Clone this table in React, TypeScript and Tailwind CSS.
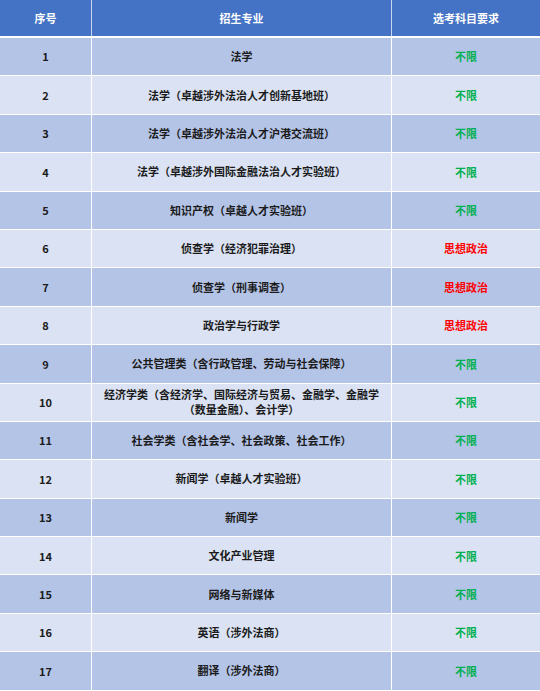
import React from 'react';

type Row = { no: number; major: React.ReactNode; req: string };

const rows: Row[] = [
  { no: 1, major: '法学', req: '不限' },
  { no: 2, major: '法学（卓越涉外法治人才创新基地班）', req: '不限' },
  { no: 3, major: '法学（卓越涉外法治人才沪港交流班）', req: '不限' },
  { no: 4, major: '法学（卓越涉外国际金融法治人才实验班）', req: '不限' },
  { no: 5, major: '知识产权（卓越人才实验班）', req: '不限' },
  { no: 6, major: '侦查学（经济犯罪治理）', req: '思想政治' },
  { no: 7, major: '侦查学（刑事调查）', req: '思想政治' },
  { no: 8, major: '政治学与行政学', req: '思想政治' },
  { no: 9, major: '公共管理类（含行政管理、劳动与社会保障）', req: '不限' },
  {
    no: 10,
    major: (
      <>
        经济学类（含经济学、国际经济与贸易、金融学、金融学
        <br />
        （数量金融）、会计学）
      </>
    ),
    req: '不限',
  },
  { no: 11, major: '社会学类（含社会学、社会政策、社会工作）', req: '不限' },
  { no: 12, major: '新闻学（卓越人才实验班）', req: '不限' },
  { no: 13, major: '新闻学', req: '不限' },
  { no: 14, major: '文化产业管理', req: '不限' },
  { no: 15, major: '网络与新媒体', req: '不限' },
  { no: 16, major: '英语（涉外法商）', req: '不限' },
  { no: 17, major: '翻译（涉外法商）', req: '不限' },
];

export default function App() {
  return (
    <div
      className="w-[540px] h-[691px] overflow-hidden bg-white text-[11px] font-bold text-[#1b1b1b]"
      style={{ fontFamily: '"Microsoft YaHei", "Noto Sans CJK SC", sans-serif' }}
    >
      <div className="grid grid-cols-[92px_300px_148px] h-[38px] bg-[#4472c4] text-white border-b-2 border-white">
        <div className="flex items-center justify-center border-r border-white/70">序号</div>
        <div className="flex items-center justify-center border-r border-white/70">招生专业</div>
        <div className="flex items-center justify-center">选考科目要求</div>
      </div>
      {rows.map((r, i) => (
        <div
          key={r.no}
          className={
            'grid grid-cols-[92px_300px_148px] h-[38.4px] border-b border-white ' +
            (i % 2 === 0 ? 'bg-[#b4c4e7]' : 'bg-[#dae2f3]')
          }
        >
          <div className="flex items-center justify-center border-r border-white">{r.no}</div>
          <div className="flex items-center justify-center text-center leading-[15px] border-r border-white">
            <span>{r.major}</span>
          </div>
          <div
            className={
              'flex items-center justify-center ' +
              (r.req === '不限' ? 'text-[#00b050]' : 'text-[#ff0000]')
            }
          >
            {r.req}
          </div>
        </div>
      ))}
    </div>
  );
}
